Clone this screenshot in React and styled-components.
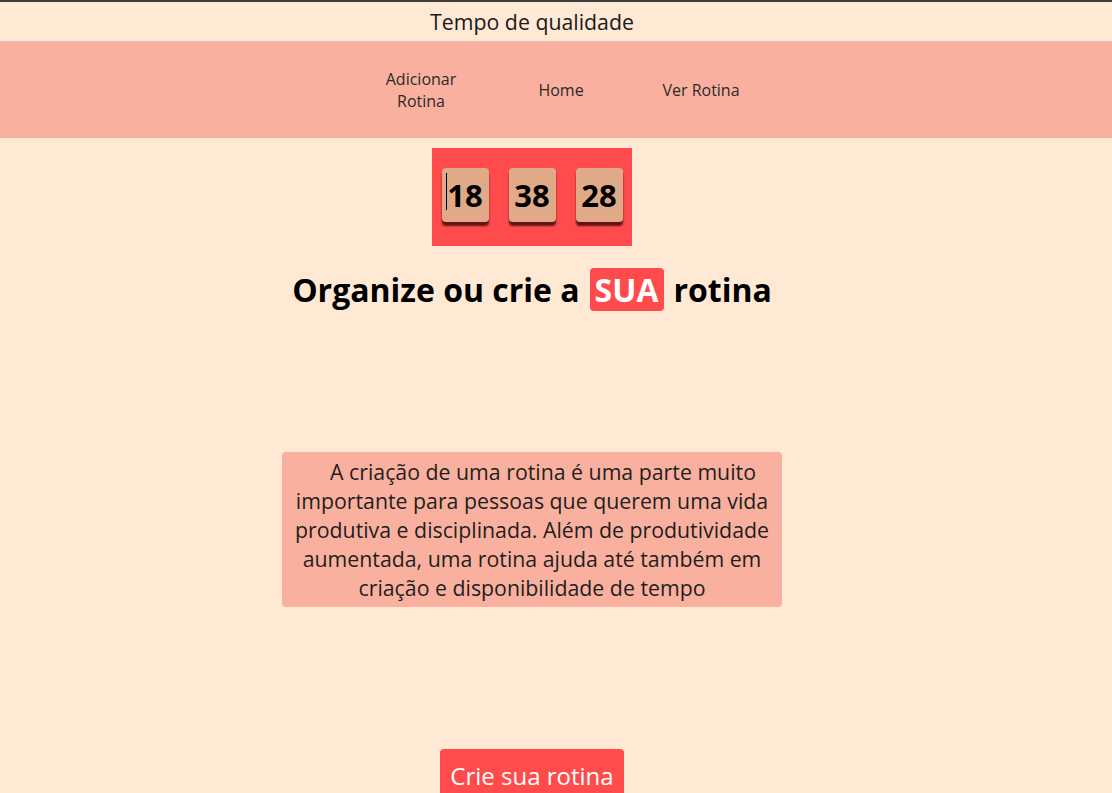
import styled, { createGlobalStyle } from "styled-components";

const GlobalStyle = createGlobalStyle`
  html, body {
    margin: 0;
    padding: 0;
    background: #ffe8d4;
    font-family: "Open Sans", "Noto Sans", sans-serif;
  }
  * {
    box-sizing: border-box;
  }
`;

const navList = [
  { id: 1, title: "Adicionar Rotina" },
  { id: 2, title: "Home" },
  { id: 3, title: "Ver Rotina" },
];

const clock = ["18", "38", "28"];

export default function App() {
  return (
    <>
      <GlobalStyle />
      <Page>
        <Header>
          <Title>Tempo de qualidade</Title>
        </Header>
        <NavBar>
          {navList.map((item) => (
            <NavItem key={item.id}>{item.title}</NavItem>
          ))}
        </NavBar>
        <Main>
          <Clock>
            {clock.map((value, i) => (
              <Digit key={i}>
                {i === 0 && <Caret />}
                {value}
              </Digit>
            ))}
          </Clock>
          <Heading>
            Organize ou crie a <Highlight>SUA</Highlight> rotina
          </Heading>
          <Text>
            A criação de uma rotina é uma parte muito importante para pessoas
            que querem uma vida produtiva e disciplinada. Além de produtividade
            aumentada, uma rotina ajuda até também em criação e disponibilidade
            de tempo
          </Text>
          <Button>Crie sua rotina</Button>
        </Main>
      </Page>
    </>
  );
}

const Page = styled.div`
  min-height: 793px;
  border-top: 2px solid #3d3d3d;
  overflow: hidden;
`;

const Header = styled.header`
  height: 40px;
  display: flex;
  align-items: center;
  justify-content: center;
  padding-right: 48px;
  border-bottom: 1px solid #e9b4b4;
`;

const Title = styled.h1`
  margin: 0;
  font-size: 21.3px;
  font-weight: 400;
  color: #1a1a1a;
`;

const NavBar = styled.nav`
  height: 96px;
  background: #fab09e;
  display: flex;
  align-items: center;
  justify-content: center;
  gap: 40px;
  padding-left: 10px;
`;

const NavItem = styled.a`
  width: 100px;
  text-align: center;
  font-size: 16px;
  line-height: 22px;
  color: #2a2a2a;
  cursor: pointer;
`;

const Main = styled.main`
  display: flex;
  flex-direction: column;
  align-items: center;
  padding-right: 48px;
`;

const Clock = styled.div`
  margin-top: 10px;
  width: 200px;
  height: 98px;
  background: #ff4b4b;
  display: flex;
  align-items: center;
  justify-content: center;
  gap: 20px;
`;

const Digit = styled.div`
  position: relative;
  width: 47px;
  height: 54px;
  margin-top: -4px;
  background: #e0aa88;
  border-radius: 4px;
  box-shadow: 0 4px 2px rgba(70, 10, 10, 0.85);
  display: flex;
  align-items: center;
  justify-content: center;
  font-size: 31px;
  font-weight: 700;
  color: #000;
`;

const Caret = styled.span`
  position: absolute;
  left: 4px;
  top: 5px;
  width: 1px;
  height: 37px;
  background: #000;
`;

const Heading = styled.h2`
  margin: 22px 0 0;
  font-size: 32px;
  font-weight: 700;
  color: #000;
  display: flex;
  align-items: center;
  gap: 10px;
`;

const Highlight = styled.span`
  background: #ff4b4b;
  color: #fff;
  border-radius: 4px;
  padding: 0 5px;
`;

const Text = styled.p`
  margin: 141px 0 0;
  width: 500px;
  padding: 5px 10px;
  background: #fab09e;
  border-radius: 4px;
  text-align: center;
  text-indent: 22px;
  font-size: 21.3px;
  line-height: 29px;
  color: #1f1f1f;
`;

const Button = styled.button`
  margin-top: 142px;
  background: #ff4b4b;
  color: #fff;
  border: none;
  border-radius: 4px;
  font-family: "Open Sans", sans-serif;
  font-size: 24px;
  padding: 10px 10px;
`;
